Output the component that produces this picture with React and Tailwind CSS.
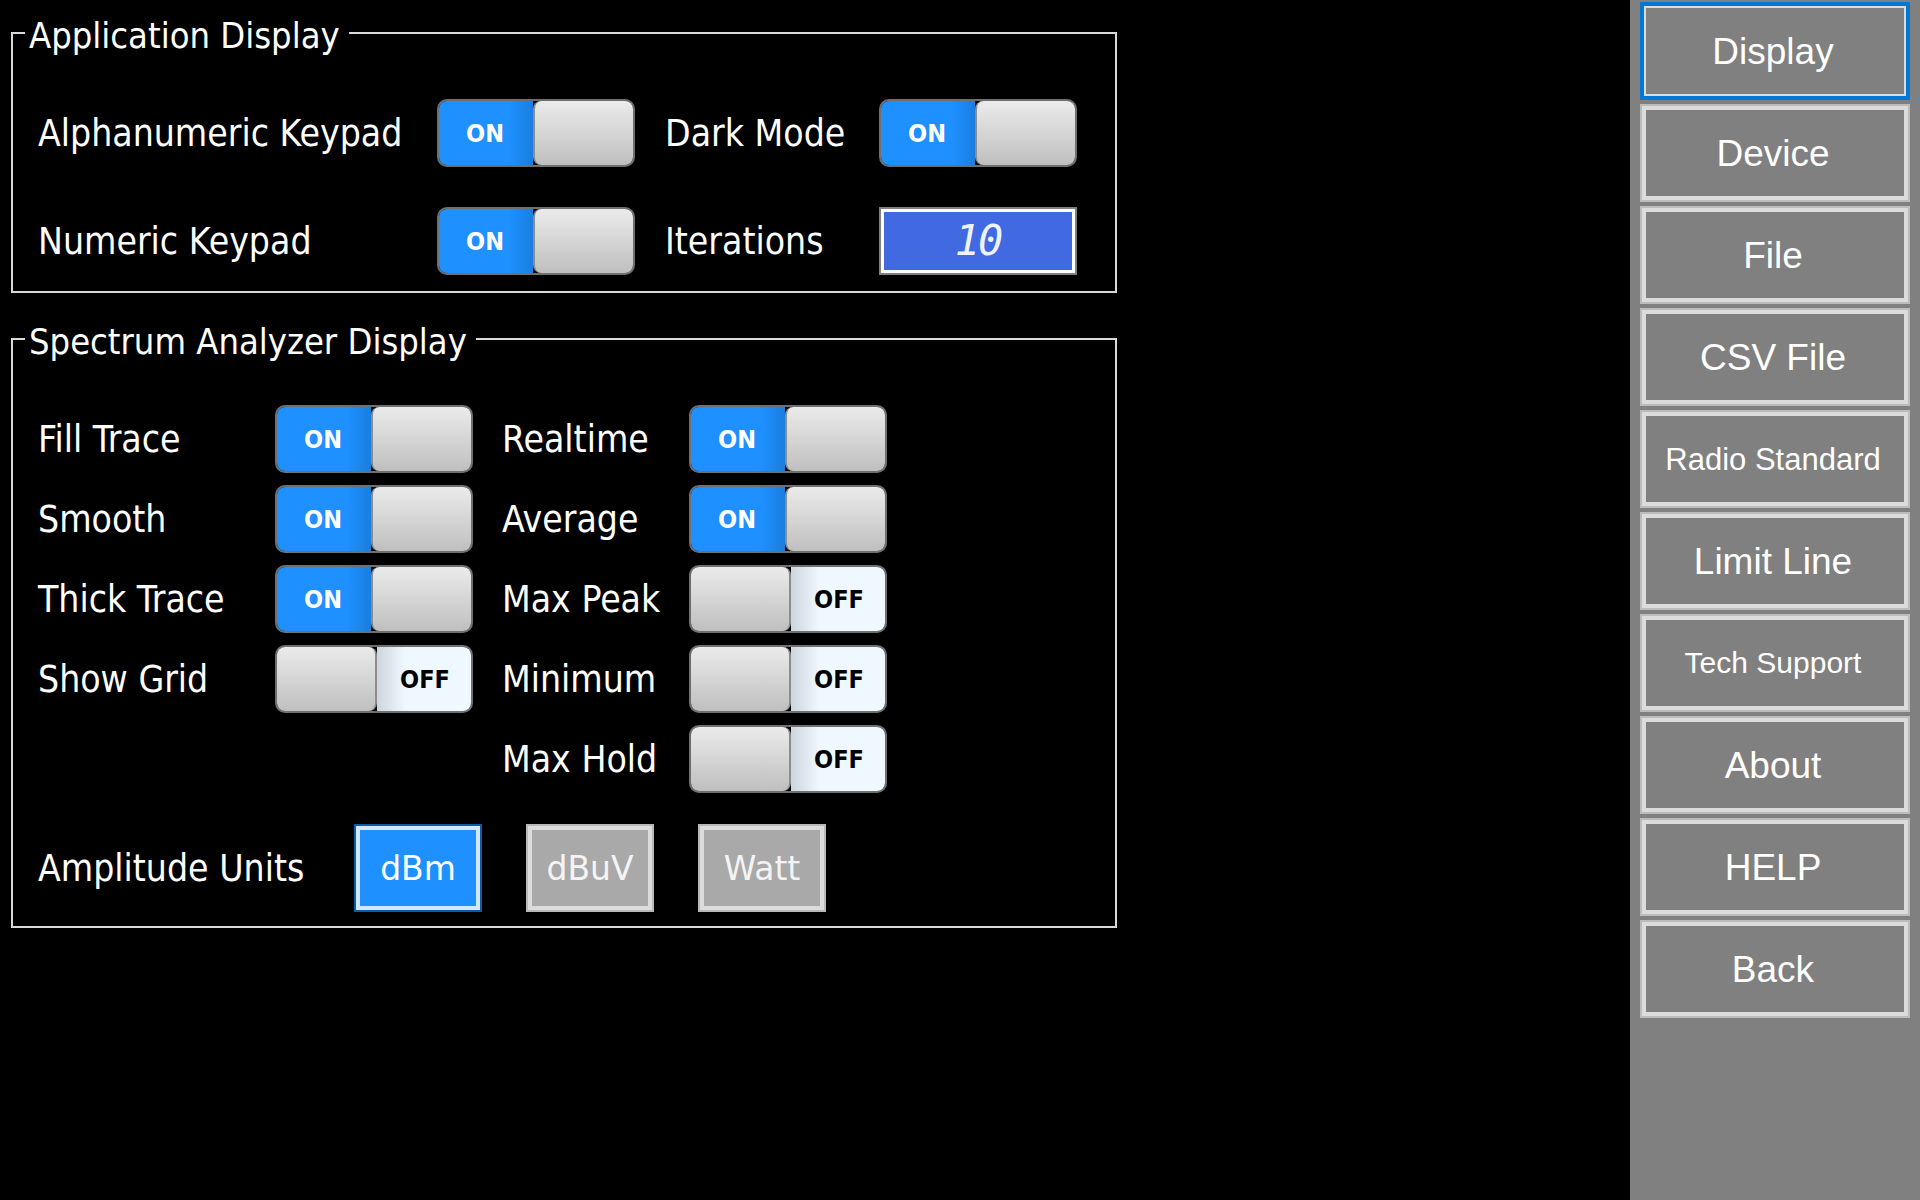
import React from 'react';

const LABEL_FONT = { fontFamily: '"DejaVu Sans Condensed", "DejaVu Sans", sans-serif' };

const NAV = [
  { label: 'Display', size: 'text-[37px]', active: true },
  { label: 'Device', size: 'text-[37px]' },
  { label: 'File', size: 'text-[37px]' },
  { label: 'CSV File', size: 'text-[37px]' },
  { label: 'Radio Standard', size: 'text-[31px]' },
  { label: 'Limit Line', size: 'text-[37px]' },
  { label: 'Tech Support', size: 'text-[30px]' },
  { label: 'About', size: 'text-[37px]' },
  { label: 'HELP', size: 'text-[37px]' },
  { label: 'Back', size: 'text-[37px]' },
];

function Toggle({ on }) {
  const knob = on
    ? 'rounded-l-[8px] border-l-2'
    : 'rounded-r-[8px] border-r-2';
  return (
    <div className="flex h-[68px] w-[198px] overflow-hidden rounded-[10px] border-2 border-[#6f6f6f]">
      {on && (
        <div className="flex flex-1 items-center justify-center bg-[linear-gradient(90deg,#1e90ff_75%,#1a7ee0)] pr-[2px] text-[25px] font-bold leading-none text-white" style={LABEL_FONT}>
          ON
        </div>
      )}
      <div className={`w-[100px] border-[#8c8c8c] bg-[linear-gradient(180deg,#ebebeb,#bfbfbf)] ${knob}`} />
      {!on && (
        <div className="flex flex-1 items-center justify-center bg-[linear-gradient(90deg,#cdd5dd,#f0f8ff_30%)] pl-[2px] text-[25px] font-bold leading-none text-black" style={LABEL_FONT}>
          OFF
        </div>
      )}
    </div>
  );
}

function Label({ children, className = '' }) {
  return (
    <div className={`text-[37px] leading-none text-white ${className}`} style={LABEL_FONT}>
      {children}
    </div>
  );
}

function Group({ title, className = '', children }) {
  return (
    <fieldset className={`w-[1106px] border-2 border-[#d9d9d9] ${className}`}>
      <legend className="ml-[12px] pl-[4px] pr-[9px] text-[36px] leading-[40px] text-white" style={LABEL_FONT}>
        <span className="inline-block translate-y-[3px]">{title}</span>
      </legend>
      {children}
    </fieldset>
  );
}

function UnitButton({ label, active }) {
  return (
    <div
      className={`flex h-[88px] w-[128px] items-center justify-center border-2 text-[33px] leading-none text-[#f4f4f4] ${
        active
          ? 'border-[#0b5ca8] bg-[#1e90ff] shadow-[inset_0_0_0_4px_#d4e8fb] text-white'
          : 'border-[#b8b8b8] bg-[#a9a9a9] shadow-[inset_0_0_0_4px_#dcdcdc]'
      }`}
      style={{ fontFamily: '"DejaVu Sans", sans-serif' }}
    >
      {label}
    </div>
  );
}

export default function App() {
  return (
    <div className="flex h-[1200px] w-[1920px] overflow-hidden bg-black">
      {/* Settings area */}
      <div className="w-[1630px] pl-[11px]">
        <Group title="Application Display" className="mt-[13px] pb-[16px]">
          <div className="grid grid-cols-[399px_198px_244px_198px] items-center gap-y-[40px] pl-[25px] pt-[46px]">
            <Label>Alphanumeric Keypad</Label>
            <Toggle on />
            <Label className="pl-[30px]">Dark Mode</Label>
            <Toggle on />
            <Label>Numeric Keypad</Label>
            <Toggle on />
            <Label className="pl-[30px]">Iterations</Label>
            <div className="flex h-[68px] w-[198px] items-center justify-center border-2 border-[#808080] bg-[#4169e1] shadow-[inset_0_0_0_3px_#ffffff]">
              <span className="text-[42px] font-extralight italic leading-none tracking-[-2px] text-[#eef2ff]" style={{ fontFamily: '"DejaVu Sans Mono", monospace' }}>
                10
              </span>
            </div>
          </div>
        </Group>

        <Group title="Spectrum Analyzer Display" className="mt-[26px] pb-[14px]">
          <div className="grid grid-cols-[237px_198px_216px_198px] items-center gap-y-[12px] pl-[25px] pt-[46px]">
            <Label>Fill Trace</Label>
            <Toggle on />
            <Label className="pl-[29px]">Realtime</Label>
            <Toggle on />

            <Label>Smooth</Label>
            <Toggle on />
            <Label className="pl-[29px]">Average</Label>
            <Toggle on />

            <Label>Thick Trace</Label>
            <Toggle on />
            <Label className="pl-[29px]">Max Peak</Label>
            <Toggle on={false} />

            <Label>Show Grid</Label>
            <Toggle on={false} />
            <Label className="pl-[29px]">Minimum</Label>
            <Toggle on={false} />

            <div />
            <div />
            <Label className="pl-[29px]">Max Hold</Label>
            <Toggle on={false} />
          </div>

          <div className="mt-[31px] flex items-center pl-[25px]">
            <Label className="w-[316px]">Amplitude Units</Label>
            <div className="flex gap-[44px]">
              <UnitButton label="dBm" active />
              <UnitButton label="dBuV" />
              <UnitButton label="Watt" />
            </div>
          </div>
        </Group>
      </div>

      {/* Menu */}
      <div className="flex w-[290px] flex-col gap-[4px] bg-[#808080] px-[10px] pt-[2px]">
        {NAV.map((item) => (
          <div
            key={item.label}
            className={`flex h-[98px] items-center justify-center pr-[4px] leading-none text-white ${item.size} ${
              item.active
                ? 'border-4 border-[#0078d7] shadow-[inset_0_0_0_2px_#dcdcdc]'
                : 'border-2 border-[#bcbcbc] shadow-[inset_0_0_0_4px_#dcdcdc]'
            }`}
            style={{ fontFamily: '"Liberation Sans", Arial, sans-serif' }}
          >
            {item.label}
          </div>
        ))}
      </div>
    </div>
  );
}
